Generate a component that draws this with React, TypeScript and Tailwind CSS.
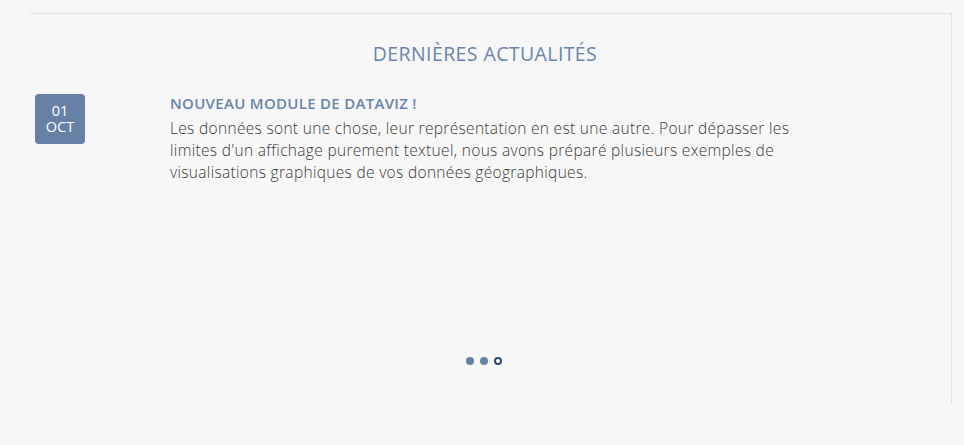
import React from 'react';

export default function App() {
  return (
    <div className="min-h-[445px] w-[964px] bg-[#f7f7f7] font-['Open_Sans',sans-serif]">
      <div className="pt-[13px] pl-[30px] pr-[12px]">
        <div className="h-[391px] border-t border-r border-[#e1e1e1]">
          <h2 className="pt-[27px] pr-[11px] text-center text-[19.5px] leading-[26px] tracking-[0.4px] text-[#6a84aa]">
            DERNIÈRES ACTUALITÉS
          </h2>

          <div className="mt-[27px] flex pl-[5px]">
            <div className="flex h-[50px] w-[50px] shrink-0 flex-col items-center justify-center rounded-[4px] bg-[#6680a6] text-[14.5px] leading-[16px] text-white">
              <span>01</span>
              <span>OCT</span>
            </div>

            <div className="ml-[85px] w-[660px]">
              <h3 className="text-[15px] font-semibold leading-[18px] tracking-[0.3px] text-[#6a84aa]">
                NOUVEAU MODULE DE DATAVIZ !
              </h3>
              <p className="mt-[5px] text-[15.5px] font-light leading-[22px] tracking-[0.32px] text-[#3a3a3a]">
                Les données sont une chose, leur représentation en est une autre. Pour dépasser les
                <br />
                limites d'un affichage purement textuel, nous avons préparé plusieurs exemples de
                <br />
                visualisations graphiques de vos données géographiques.
              </p>
            </div>
          </div>

          <div className="mt-[174px] flex justify-center gap-[6px] pr-[14px]">
            <span className="h-[8px] w-[8px] rounded-full bg-[#6680a6]" />
            <span className="h-[8px] w-[8px] rounded-full bg-[#6680a6]" />
            <span className="h-[8px] w-[8px] rounded-full border-2 border-[#2d4a70] bg-white" />
          </div>
        </div>
      </div>
    </div>
  );
}
